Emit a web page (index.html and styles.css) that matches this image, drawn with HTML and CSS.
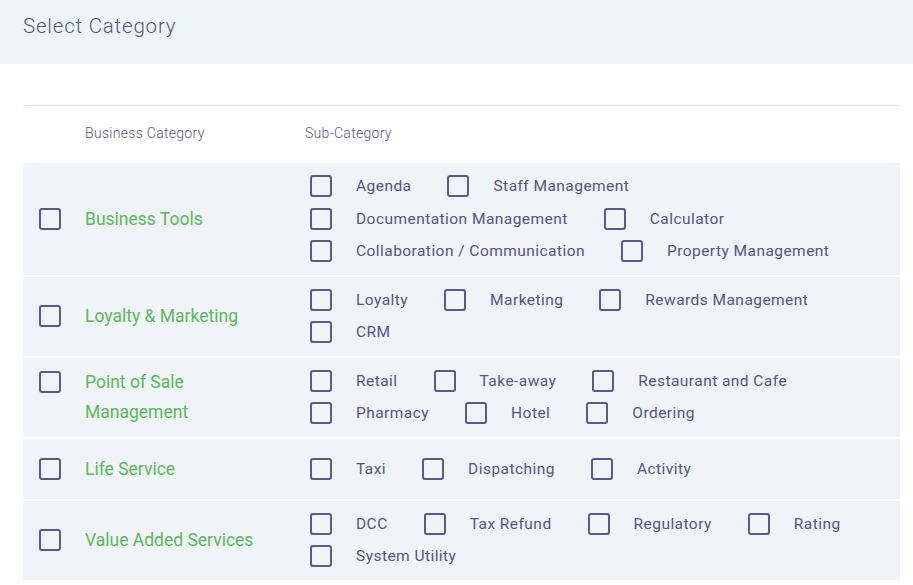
FILE: index.html
```html
<!DOCTYPE html>
<html lang="en">
<head>
<meta charset="utf-8">
<title>Select Category</title>
<link rel="stylesheet" href="styles.css">
</head>
<body>
<header class="page-head">
  <h1 class="page-title">Select Category</h1>
</header>
<main class="panel">
  <div class="thead">
    <div class="th th-cat">Business Category</div>
    <div class="th th-sub">Sub-Category</div>
  </div>

  <div class="row">
    <div class="main"><span class="cb"></span><span class="name">Business Tools</span></div>
    <ul class="subs">
      <li class="sub"><span class="cb"></span><span class="lbl">Agenda</span></li>
      <li class="sub"><span class="cb"></span><span class="lbl">Staff Management</span></li>
      <li class="sub"><span class="cb"></span><span class="lbl">Documentation Management</span></li>
      <li class="sub"><span class="cb"></span><span class="lbl">Calculator</span></li>
      <li class="sub"><span class="cb"></span><span class="lbl">Collaboration / Communication</span></li>
      <li class="sub"><span class="cb"></span><span class="lbl">Property Management</span></li>
    </ul>
  </div>

  <div class="row">
    <div class="main"><span class="cb"></span><span class="name">Loyalty &amp; Marketing</span></div>
    <ul class="subs">
      <li class="sub"><span class="cb"></span><span class="lbl">Loyalty</span></li>
      <li class="sub"><span class="cb"></span><span class="lbl">Marketing</span></li>
      <li class="sub"><span class="cb"></span><span class="lbl">Rewards Management</span></li>
      <li class="sub"><span class="cb"></span><span class="lbl">CRM</span></li>
    </ul>
  </div>

  <div class="row">
    <div class="main"><span class="cb"></span><span class="name">Point of Sale Management</span></div>
    <ul class="subs">
      <li class="sub"><span class="cb"></span><span class="lbl">Retail</span></li>
      <li class="sub"><span class="cb"></span><span class="lbl">Take-away</span></li>
      <li class="sub"><span class="cb"></span><span class="lbl">Restaurant and Cafe</span></li>
      <li class="sub"><span class="cb"></span><span class="lbl">Pharmacy</span></li>
      <li class="sub"><span class="cb"></span><span class="lbl">Hotel</span></li>
      <li class="sub"><span class="cb"></span><span class="lbl">Ordering</span></li>
    </ul>
  </div>

  <div class="row">
    <div class="main"><span class="cb"></span><span class="name">Life Service</span></div>
    <ul class="subs">
      <li class="sub"><span class="cb"></span><span class="lbl">Taxi</span></li>
      <li class="sub"><span class="cb"></span><span class="lbl">Dispatching</span></li>
      <li class="sub"><span class="cb"></span><span class="lbl">Activity</span></li>
    </ul>
  </div>

  <div class="row">
    <div class="main"><span class="cb"></span><span class="name">Value Added Services</span></div>
    <ul class="subs">
      <li class="sub"><span class="cb"></span><span class="lbl">DCC</span></li>
      <li class="sub"><span class="cb"></span><span class="lbl">Tax Refund</span></li>
      <li class="sub"><span class="cb"></span><span class="lbl">Regulatory</span></li>
      <li class="sub"><span class="cb"></span><span class="lbl">Rating</span></li>
      <li class="sub"><span class="cb"></span><span class="lbl">System Utility</span></li>
    </ul>
  </div>
</main>
</body>
</html>
```

FILE: styles.css
```css
* { box-sizing: border-box; }

html, body {
  margin: 0;
  padding: 0;
  background: #ffffff;
  font-family: Roboto, "Liberation Sans", sans-serif;
  color: #55557f;
}

.page-head {
  height: 64px;
  background: #eef5f8;
  padding-left: 23px;
}

.page-title {
  margin: 0;
  font-size: 20.5px;
  font-weight: 300;
  letter-spacing: 0.8px;
  line-height: 53px;
  color: #56567a;
}

.panel {
  margin: 41px 13px 0 23px;
  border-top: 1px solid #dde3e8;
}

.thead {
  display: grid;
  grid-template-columns: 282px 1fr;
  height: 57px;
  padding-bottom: 3px;
  align-items: center;
}

.th {
  font-size: 14px;
  font-weight: 300;
  letter-spacing: 0.3px;
  color: #55557d;
}

.th-cat { padding-left: 62px; }

.row {
  display: grid;
  grid-template-columns: 282px 1fr;
  min-height: 60px;
  background: #f0f3f7;
  margin-bottom: 2px;
}

.main {
  display: flex;
  align-items: flex-start;
  align-self: center;
  padding-left: 16px;
}

.cb {
  flex: none;
  width: 22px;
  height: 22px;
  border: 2px solid #5a5a8a;
  border-radius: 3px;
  background: transparent;
}

.main .cb {
  margin-top: 4px;
  margin-right: 24px;
}

.name {
  width: 185px;
  font-size: 17.5px;
  line-height: 30px;
  color: #5cb85c;
}

.subs {
  list-style: none;
  margin: 0;
  padding: 7px 12px 7px 5px;
  display: flex;
  flex-wrap: wrap;
  align-self: center;
}

.sub {
  display: flex;
  align-items: center;
  height: 32.5px;
  margin-right: 36px;
}

.sub .cb { margin-right: 24px; }

.lbl {
  font-size: 15.5px;
  letter-spacing: 0.45px;
  color: #55557f;
  white-space: nowrap;
}
```
